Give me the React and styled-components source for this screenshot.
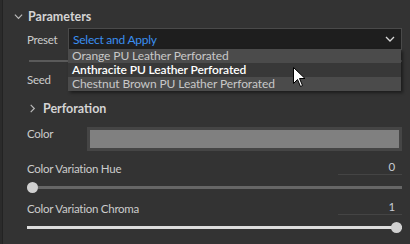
import React from 'react';
import styled, { createGlobalStyle } from 'styled-components';

const GlobalStyle = createGlobalStyle`
  html, body {
    margin: 0;
    padding: 0;
    background: #333333;
  }
  body {
    font-family: Lato, "Noto Sans", sans-serif;
  }
`;

const Panel = styled.div`
  position: relative;
  width: 410px;
  height: 244px;
  box-sizing: border-box;
  background: #333333;
  border-left: 2px solid #2b2b2b;
  box-shadow: inset 1px 0 0 #232323;
  overflow: hidden;
  color: #cccccc;
  font-size: 11.5px;
  letter-spacing: -0.25px;
`;

const SectionHeader = styled.div`
  display: flex;
  align-items: center;
  height: 16px;
  margin-top: ${props => props.top}px;
  padding-left: ${props => props.indent}px;
  gap: ${props => props.gap}px;
  font-weight: bold;
  font-size: 12.5px;
  letter-spacing: 0;
  color: #d4d4d4;
`;

const Row = styled.div`
  display: flex;
  align-items: ${props => props.align || 'center'};
  height: ${props => props.height}px;
  margin-top: ${props => props.top || 0}px;
  padding-left: 25px;
  padding-right: 8px;
`;

const Label = styled.span`
  width: ${props => props.width || 'auto'};
  flex-shrink: 0;
  white-space: nowrap;
`;

const SelectWrap = styled.div`
  position: relative;
  flex: 1;
`;

const SelectBox = styled.div`
  display: flex;
  align-items: center;
  justify-content: space-between;
  height: 20px;
  box-sizing: content-box;
  border: 1px solid #4a4a4a;
  background: #1e1e1e;
  padding: 0 6px 0 4px;
  color: #3a8ff0;
  font-size: 12px;
`;

const Dropdown = styled.div`
  position: absolute;
  left: 0;
  right: 1px;
  top: 21px;
  z-index: 2;
  box-shadow: 2px 2px 3px rgba(0, 0, 0, 0.45);
`;

const Option = styled.div`
  height: 14px;
  line-height: 14px;
  padding-left: 4px;
  font-size: 12px;
  letter-spacing: -0.1px;
  background: ${props => (props.active ? '#383838' : '#4b4b4b')};
  color: ${props => (props.active ? '#ffffff' : '#c8c8c8')};
  font-weight: ${props => (props.active ? 600 : 400)};
  white-space: nowrap;
`;

const Divider = styled.div`
  height: 2px;
  margin: 10px 8px 0 27px;
  background: #5a5a5a;
`;

const Swatch = styled.div`
  flex: 1;
  height: 18px;
  border: 3px solid #454545;
  background: #808080;
`;

const LabelRow = styled.div`
  display: flex;
  align-items: flex-end;
  justify-content: space-between;
  height: 16px;
  margin-top: ${props => props.top}px;
  padding: 0 8px 0 25px;
`;

const ValueBox = styled.div`
  width: 64px;
  text-align: right;
  padding-right: 7px;
  box-sizing: border-box;
  border-bottom: 1px solid #444444;
  color: #c6cbd4;
  line-height: 15px;
`;

const SliderTrack = styled.div`
  position: relative;
  height: 3px;
  margin: 11px 8px 0 25px;
  background: ${props => (props.full ? '#dddddd' : '#666666')};
`;

const Thumb = styled.div`
  position: absolute;
  top: -4px;
  left: ${props => (props.full ? 'calc(100% - 11px)' : '0')};
  width: 11px;
  height: 11px;
  border-radius: 50%;
  background: #d0d0d0;
`;

const Cursor = styled.svg`
  position: absolute;
  left: 291px;
  top: 67px;
  z-index: 3;
`;

const Chevron = ({ dir, color = '#bbbbbb', size = 9 }) => (
  <svg width={size} height={size} viewBox="0 0 10 10">
    <path
      d={dir === 'down' ? 'M1 3 L5 7 L9 3' : 'M3 1 L7 5 L3 9'}
      fill="none"
      stroke={color}
      strokeWidth="1.3"
    />
  </svg>
);

const options = [
  'Orange PU Leather Perforated',
  'Anthracite PU Leather Perforated',
  'Chestnut Brown PU Leather Perforated',
];

export default function App() {
  return (
    <>
      <GlobalStyle />
      <Panel>
        <SectionHeader indent={12} gap={5} top={8}>
          <Chevron dir="down" />
          <span>Parameters</span>
        </SectionHeader>
        <Row height={22} top={4}>
          <Label width="41px">Preset</Label>
          <SelectWrap>
            <SelectBox>
              <span>Select and Apply</span>
              <Chevron dir="down" color="#d8d8d8" size={10} />
            </SelectBox>
            <Dropdown>
              {options.map((o, i) => (
                <Option key={o} active={i === 1}>
                  {o}
                </Option>
              ))}
            </Dropdown>
          </SelectWrap>
        </Row>
        <Divider />
        <Row height={16} top={9}>
          <Label>Seed</Label>
        </Row>
        <SectionHeader indent={26} gap={6} top={13}>
          <Chevron dir="right" />
          <span>Perforation</span>
        </SectionHeader>
        <Row height={24} top={11} align="flex-start">
          <Label width="60px">Color</Label>
          <Swatch />
        </Row>
        <LabelRow top={8}>
          <span>Color Variation Hue</span>
          <ValueBox>0</ValueBox>
        </LabelRow>
        <SliderTrack>
          <Thumb />
        </SliderTrack>
        <LabelRow top={10}>
          <span>Color Variation Chroma</span>
          <ValueBox>1</ValueBox>
        </LabelRow>
        <SliderTrack full>
          <Thumb full />
        </SliderTrack>
        <Cursor width="13" height="21" viewBox="0 0 13 21">
          <path
            d="M0.5 0.5 L0.5 16.5 L4.5 12.5 L7.5 19.5 L9.5 18.5 L6.5 11.5 L12 11.5 Z"
            fill="#ffffff"
            stroke="#000000"
            strokeWidth="1"
          />
        </Cursor>
      </Panel>
    </>
  );
}
